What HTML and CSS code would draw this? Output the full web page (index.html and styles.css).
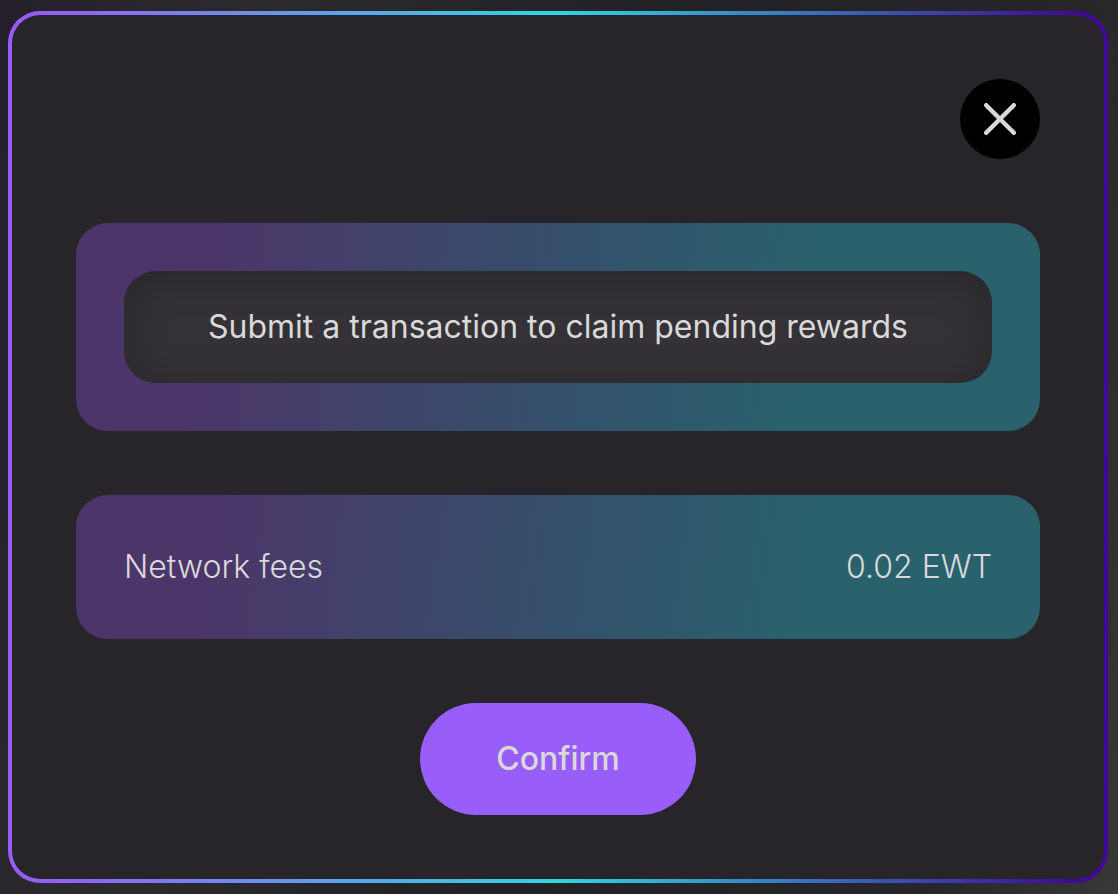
FILE: index.html
```html
<!DOCTYPE html>
<html lang="en">

<head>
    <meta charset="UTF-8">
    <meta name="viewport" content="width=device-width, initial-scale=1">
    <title>Claim rewards</title>
    <link rel="stylesheet" href="styles.css">
</head>

<body>
    <main class="modal" role="dialog" aria-label="Claim rewards">
        <button type="button" class="close" aria-label="Close">
            <svg viewBox="0 0 32 32" width="32" height="32" aria-hidden="true">
                <path d="M2.2 2.2 L29.8 29.8 M29.8 2.2 L2.2 29.8" />
            </svg>
        </button>
        <section class="card">
            <p class="message">Submit a transaction to claim pending rewards</p>
        </section>
        <section class="card fees">
            <span>Network fees</span>
            <span>0.02 EWT</span>
        </section>
        <button type="button" class="confirm">Confirm</button>
    </main>
</body>

</html>
```

FILE: styles.css
```css
* {
    box-sizing: border-box;
}

body {
    margin: 0;
    padding: 11px 10px 11px 8px;
    min-height: 100vh;
    background: linear-gradient(100deg, #251f2b 0%, #2b2b2d 20%, #222125 50%, #262629 85%, #383836 100%);
    color: #d9d9d9;
    font-family: Inter, "Liberation Sans", sans-serif;
    font-size: 32px;
    line-height: 48px;
}

.modal {
    display: flex;
    flex-direction: column;
    gap: 64px;
    padding: 64px;
    border: 4px solid transparent;
    border-radius: 32px;
    background:
        linear-gradient(#272529, #272529) padding-box,
        linear-gradient(90deg, #975dfa 3%, #2fd6e3 50%, #410899 97%) border-box;
}

.close {
    display: flex;
    align-items: center;
    justify-content: center;
    align-self: flex-end;
    width: 80px;
    height: 80px;
    padding: 0;
    border: none;
    border-radius: 50%;
    background: #000;
    cursor: pointer;
}

.close path {
    fill: none;
    stroke: #d9d9d9;
    stroke-width: 4.4;
    stroke-linecap: round;
}

.card {
    padding: 48px;
    border-radius: 32px;
    background: linear-gradient(98deg, #4c3669 14%, #344f6b 50%, #29626c 76%);
}

.message {
    margin: 0;
    padding: 32px;
    border-radius: 32px;
    background: #343236;
    box-shadow: inset 0 4px 40px rgba(0, 0, 0, 0.25);
    text-align: center;
}

.fees {
    display: flex;
    justify-content: space-between;
    font-weight: 300;
}

.confirm {
    align-self: center;
    padding: 32px 76px;
    border: none;
    border-radius: 56px;
    background: #995df9;
    color: #d9d9d9;
    font: inherit;
    font-weight: 500;
    cursor: pointer;
}
```
